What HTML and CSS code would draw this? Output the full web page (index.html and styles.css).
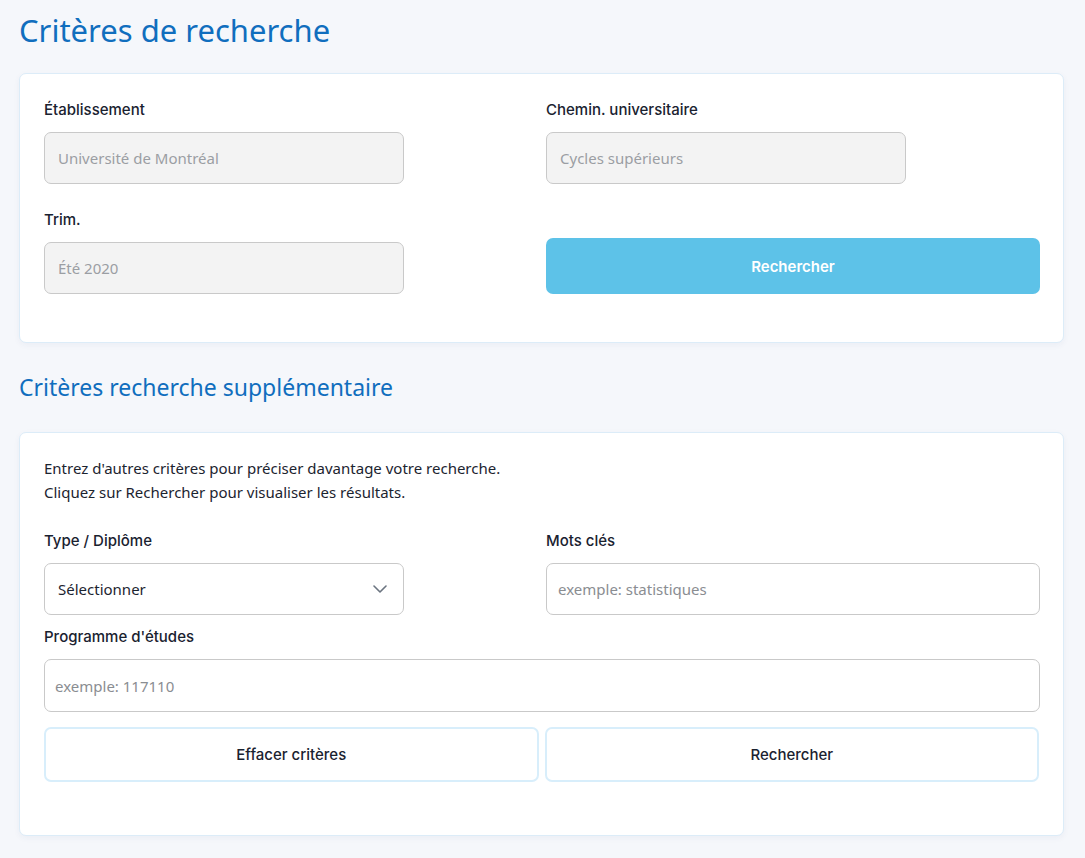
FILE: index.html
```html
<!DOCTYPE html>
<html lang="fr">
<head>
<meta charset="utf-8">
<title>Critères de recherche</title>
<link rel="stylesheet" href="styles.css">
</head>
<body>
<main class="page">
  <h1 class="title">Critères de recherche</h1>
  <section class="card card-main">
    <div class="grid grid-main">
      <div class="field">
        <label class="label">Établissement</label>
        <div class="input input-disabled input-short">Université de Montréal</div>
      </div>
      <div class="field">
        <label class="label">Chemin. universitaire</label>
        <div class="input input-disabled input-short">Cycles supérieurs</div>
      </div>
      <div class="field">
        <label class="label">Trim.</label>
        <div class="input input-disabled input-short">Été 2020</div>
      </div>
      <div class="field field-end">
        <button class="btn-primary">Rechercher</button>
      </div>
    </div>
  </section>

  <h2 class="subtitle">Critères recherche supplémentaire</h2>
  <section class="card card-extra">
    <p class="intro">Entrez d'autres critères pour préciser davantage votre recherche.<br>Cliquez sur Rechercher pour visualiser les résultats.</p>
    <div class="grid grid-extra">
      <div class="field">
        <label class="label">Type / Diplôme</label>
        <div class="input select input-short">
          <span>Sélectionner</span>
          <svg class="chevron" width="14" height="8" viewBox="0 0 14 8"><path d="M1 1l6 6 6-6" fill="none" stroke="#6b7480" stroke-width="1.6" stroke-linecap="round" stroke-linejoin="round"/></svg>
        </div>
      </div>
      <div class="field">
        <label class="label">Mots clés</label>
        <div class="input placeholder">exemple: statistiques</div>
      </div>
      <div class="field span2">
        <label class="label">Programme d'études</label>
        <div class="input placeholder input-tight input-tall">exemple: 117110</div>
      </div>
    </div>
    <div class="actions">
      <button class="btn-outline">Effacer critères</button>
      <button class="btn-outline">Rechercher</button>
    </div>
  </section>
</main>
</body>
</html>
```

FILE: styles.css
```css
* { box-sizing: border-box; }
html, body { margin: 0; padding: 0; }
body {
  background: #f5f7fb;
  font-family: "Noto Sans", "Open Sans", sans-serif;
  color: #1c2430;
  width: 1085px;
  height: 858px;
  overflow: hidden;
}
.page { padding: 0 21px 0 19px; }
.title {
  margin: 0;
  padding-top: 10px;
  height: 73px;
  font-size: 31px;
  font-weight: 400;
  color: #106ebe;
  line-height: 40px;
}
.card {
  background: #fff;
  border: 1px solid #dcecf8;
  border-radius: 7px;
  box-shadow: 0 2px 6px rgba(30, 60, 110, 0.05);
  padding: 24px 24px 0 24px;
}
.card-main { height: 270px; }
.card-extra { height: 404px; padding-top: 23px; }
.grid {
  display: grid;
  grid-template-columns: 494px 494px;
  column-gap: 8px;
}
.grid-main { row-gap: 24px; }
.field { display: flex; flex-direction: column; }
.field-end { justify-content: flex-end; }
.span2 { grid-column: 1 / span 2; }
.label {
  font-family: "Inter", "Noto Sans", sans-serif;
  font-size: 15px;
  font-weight: 500;
  line-height: 24px;
  height: 24px;
  margin-bottom: 10px;
  color: #1a2230;
}
.input {
  height: 52px;
  border: 1px solid #c9c9c9;
  border-radius: 7px;
  padding: 0 13px;
  display: flex;
  align-items: center;
  font-size: 15px;
  color: #1c2430;
  background: #fff;
}
.input-tall { height: 53px; }
.input-short { width: 360px; }
.input-disabled { background: #f3f3f3; color: #9b9ea3; }
.placeholder { color: #8a8d92; padding: 0 11px; }
.input-tight { padding: 0 10px; }
.select { justify-content: space-between; padding-right: 16px; }
.chevron { display: block; }
.btn-primary {
  height: 56px;
  width: 100%;
  border: none;
  border-radius: 7px;
  background: #5dc2e8;
  color: #fff;
  font-family: "Inter", "Noto Sans", sans-serif;
  font-size: 15px;
  font-weight: 600;
}
.subtitle {
  margin: 0;
  height: 89px;
  padding-top: 28px;
  font-size: 23px;
  font-weight: 400;
  line-height: 32px;
  color: #106ebe;
}
.intro {
  margin: 0 0 25px 0;
  font-size: 15px;
  line-height: 24px;
  color: #1c2430;
}
.grid-extra { row-gap: 10px; }
.actions {
  display: grid;
  grid-template-columns: 1fr 1fr;
  gap: 6px;
  margin-top: 15px;
}
.btn-outline {
  height: 55px;
  background: #fff;
  border: 2px solid #d8eefb;
  border-radius: 7px;
  font-family: "Inter", "Noto Sans", sans-serif;
  font-size: 15px;
  font-weight: 500;
  color: #1a2230;
}
```
